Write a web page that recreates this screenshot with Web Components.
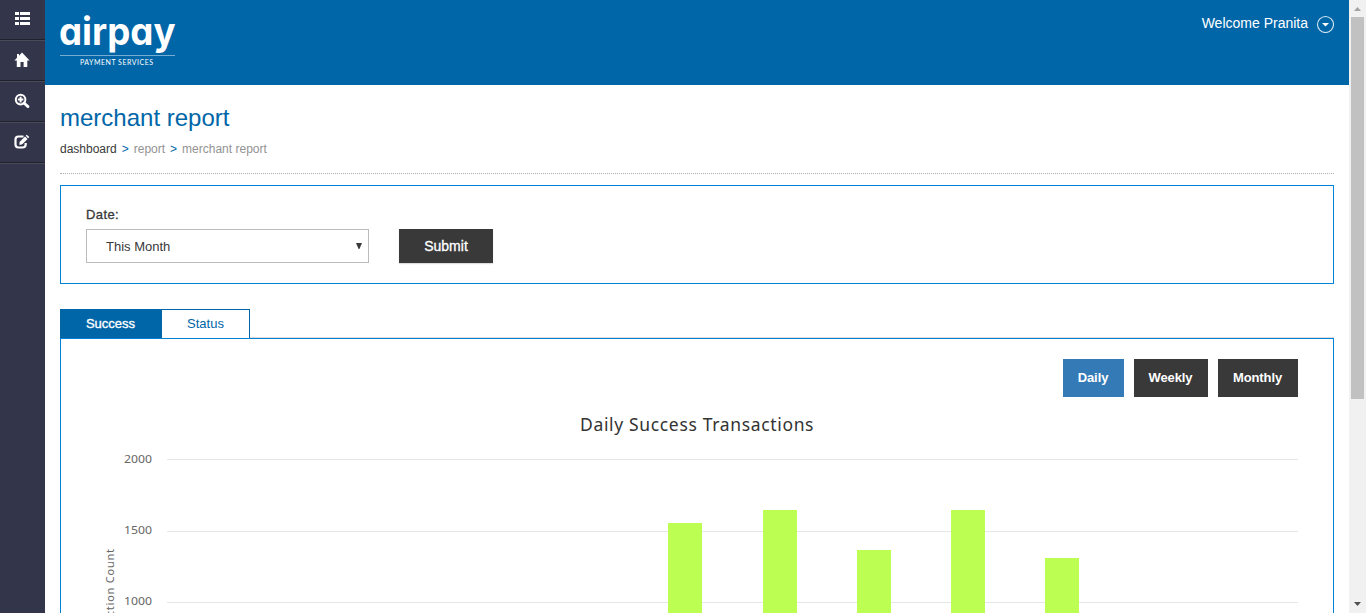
<!DOCTYPE html>
<html lang="en">
<head>
<meta charset="utf-8">
<title>merchant report</title>
<style>
html,body{margin:0;height:100%;overflow:hidden}
body{font-family:"Liberation Sans",Arial,sans-serif;font-size:13px;color:#393939;background:#fff}
</style>
</head>
<body>
<report-page></report-page>
<script>
const define = (name, html, setup) => customElements.define(name, class extends HTMLElement {
  connectedCallback() {
    if (this.shadowRoot) return;
    const t = document.createElement('template');
    t.innerHTML = html;
    this.attachShadow({mode: 'open'}).append(t.content.cloneNode(true));
    if (setup) setup(this, this.shadowRoot);
  }
});

define('nav-item', `<style>
:host{display:flex;box-sizing:border-box;height:41px;padding:0 1px 1px 0;align-items:center;justify-content:center;border-top:1px solid #494b58;border-bottom:1px solid #1f212b}
:host([first]){border-top:0;height:40px;padding-bottom:2px}
</style><slot></slot>`);

define('side-nav', `<style>
:host{display:block;width:45px;background:#33364a;flex:none}
svg{display:block;fill:#fff}
.end{height:1px;background:#494b58}
</style>
<nav-item first><svg width="15" height="13" viewBox="0 0 15 13" shape-rendering="crispEdges"><path d="M0 0h4v3H0zM5 0h10v3H5zM0 5h4v3H0zM5 5h10v3H5zM0 10h4v3H0zM5 10h10v3H5z"/></svg></nav-item>
<nav-item><svg width="16" height="16" viewBox="0 0 16 16"><path d="M8 .6 15.6 8.4H13.3V15H9.6V10H6.5V15H2.8V8.4H.4L3 5.7V2H5V3.7z"/></svg></nav-item>
<nav-item><svg width="16" height="16" viewBox="0 0 16 16"><circle cx="6.6" cy="6.6" r="4.8" fill="none" stroke="#fff" stroke-width="2"/><path d="M10 10l4 3.6" stroke="#fff" stroke-width="2.8" stroke-linecap="round"/><path d="M5.6 3.8h2v1.8h1.8v2H7.600v1.800h-2V7.600H3.800v-2h1.800z"/></svg></nav-item>
<nav-item><svg width="16" height="16" viewBox="0 0 16 16"><path d="M9.500 2.500H4.500Q1.500 2.500 1.500 5.500V10.500Q1.500 13.500 4.500 13.500H8.500Q11.700 13.500 11.700 10.500V9" fill="none" stroke="#fff" stroke-width="2.200"/><path d="M5.500 11V7.900L11 2.400 13.600 5 8.300 10.200zM11.700 1.700 12.700.8 15.300 2.900 14.200 4.300z"/></svg></nav-item>
<div class="end"></div>`);

define('brand-logo', `<style>:host{display:block;width:120px;height:60px}svg{display:block;overflow:visible}text{fill:#fff}</style>
<svg width="120" height="60">
<text x="-1" y="34.500" font-family="Inter,sans-serif" font-size="38" font-weight="700" style="font-feature-settings:'cv11'" textLength="116.500" lengthAdjust="spacingAndGlyphs">airpay</text>
<path d="M0 45.500H115" stroke="#75acd1"/>
<text x="20" y="54.500" font-family="Lato,sans-serif" font-size="7" textLength="73" lengthAdjust="spacing">PAYMENT SERVICES</text>
</svg>`);

define('top-bar', `<style>
:host{display:flex;box-sizing:border-box;height:85px;background:#0066a8;padding:10px 15px;justify-content:space-between;align-items:flex-start}
.user{display:flex;align-items:center;gap:8px;color:#fff;font-size:14px;line-height:16px;padding-top:5px}
span{position:relative;top:-1px}
svg{display:block}
</style><brand-logo></brand-logo><div class="user"><span>Welcome Pranita</span><svg width="18" height="18"><circle cx="9.500" cy="9.500" r="8" fill="none" stroke="#d5e6f1" stroke-width="1.100"/><path d="M6 8h7L9.500 11.500z" fill="#fff"/></svg></div>`);

define('page-head', `<style>
:host{display:block;height:88px;border-bottom:1px dotted #b0b0b0}
h1{margin:0;padding-top:19px;font-size:24px;font-weight:400;line-height:28px;color:#0066a8}
.crumbs{display:flex;margin-top:9px;font-size:12px;line-height:16px;color:#939393}
.crumbs b{font-weight:400;color:#0066a8;margin:0 5px}
.crumbs .home{color:#393939}
</style><h1>merchant report</h1><div class="crumbs"><span class="home">dashboard</span><b>&gt;</b><span>report</span><b>&gt;</b><span>merchant report</span></div>`);

define('filter-panel', `<style>
:host{display:flex;box-sizing:border-box;height:99px;border:1px solid #0083d6;margin-top:11px;padding:21px 25px;gap:30px;align-items:flex-start}
label{display:block;letter-spacing:.4px;-webkit-text-stroke:.3px #393939;line-height:16px;height:22px}
.select{box-sizing:border-box;width:283px;height:34px;border:1px solid #bbb;display:flex;align-items:center;justify-content:space-between;padding:0 6px 0 19px}
.submit{width:94px;height:34px;line-height:34px;margin-top:22px;background:#393939;color:#fff;font-size:14px;text-align:center;box-shadow:0 1px 1px #ddd;-webkit-text-stroke:.3px #fff}
</style><div><label>Date:</label><div class="select"><span>This Month</span><svg width="6" height="6"><path d="M0 0h6L3.400 6h-.8z" fill="#393939"/></svg></div></div><div class="submit">Submit</div>`);

define('tab-strip', `<style>
:host{display:flex;margin-top:25px;height:29px;box-sizing:border-box;border-bottom:1px solid #ddd}
div{box-sizing:border-box;height:29px;line-height:29px;text-align:center}
.on{width:102px;padding-right:1px;background:#0066a8;color:#fff;-webkit-text-stroke:.35px #fff}
.off{width:88px;border:solid #0066a8;border-width:1px 1px 0 0;line-height:28px;color:#0066a8;background:#fff}
</style><div class="on">Success</div><div class="off">Status</div>`);

define('period-button', `<style>
:host{display:block;box-sizing:border-box;height:38px;padding-right:1px;line-height:38px;background:#393939;color:#fff;font-weight:700;font-size:13px;letter-spacing:-.1px;text-align:center}
:host([active]){background:#337ab7}
</style><slot></slot>`);

define('bar-chart', `<style>
:host{display:block}
svg{display:block;font-family:"Noto Sans",sans-serif}
.axis text{font-size:11px;fill:#666}
.title{font-size:17.500px;fill:#333}
</style><svg width="1272" height="230"></svg>`, (host, root) => {
  const svg = root.querySelector('svg');
  let s = '<text class="title" x="519" y="33.500" textLength="233.500" lengthAdjust="spacing">Daily Success Transactions</text><g class="axis">';
  for (const [v, y] of [[2000, 62], [1500, 134], [1000, 205]]) {
    s += `<path d="M106 ${y + .5}H1237" stroke="#e6e6e6"/><text x="63" y="${y + (v === 2000 ? 4 : 3)}" textLength="28" lengthAdjust="spacingAndGlyphs">${v}</text>`;
  }
  s += '<text transform="translate(53 152) rotate(-90)" text-anchor="end" textLength="106">Transaction Count</text></g>';
  for (const [x, y] of [[607, 126], [702, 113], [796, 153], [890, 113], [984, 161]]) {
    s += `<rect x="${x}" y="${y}" width="34" height="${230 - y}" fill="#bcff52"/>`;
  }
  svg.innerHTML = s;
});

define('chart-panel', `<style>
:host{display:block;flex:1;overflow:hidden;border:solid #0083d6;border-width:1px 1px 0}
.row{display:flex;gap:10px;justify-content:flex-end;padding:20px 35px 0 0}
</style><div class="row"><period-button active style="width:61px">Daily</period-button><period-button style="width:74px">Weekly</period-button><period-button style="width:80px">Monthly</period-button></div><bar-chart></bar-chart>`);

define('scroll-bar', `<style>
:host{display:flex;flex-direction:column;align-items:center;width:17px;flex:none;background:#f1f1f1}
svg{display:block;flex:none}
.thumb{width:13px;height:382px;background:#c1c1c1}
.gap{flex:1}
</style><svg width="17" height="17"><path d="M5 11h7L8.500 7z" fill="#a3a3a3"/></svg><div class="thumb"></div><div class="gap"></div><svg width="17" height="17"><path d="M5 6h7L8.500 10z" fill="#505050"/></svg>`);

define('report-page', `<style>
:host{display:flex;height:613px;overflow:hidden}
main{flex:1;min-width:0;display:flex;flex-direction:column}
.content{flex:1;min-height:0;display:flex;flex-direction:column;padding:0 15px}
.content>*{flex-shrink:0}
.content>chart-panel{flex:1 1 0;min-height:0}
</style><side-nav></side-nav><main><top-bar></top-bar><div class="content"><page-head></page-head><filter-panel></filter-panel><tab-strip></tab-strip><chart-panel></chart-panel></div></main><scroll-bar></scroll-bar>`);
</script>
</body>
</html>
